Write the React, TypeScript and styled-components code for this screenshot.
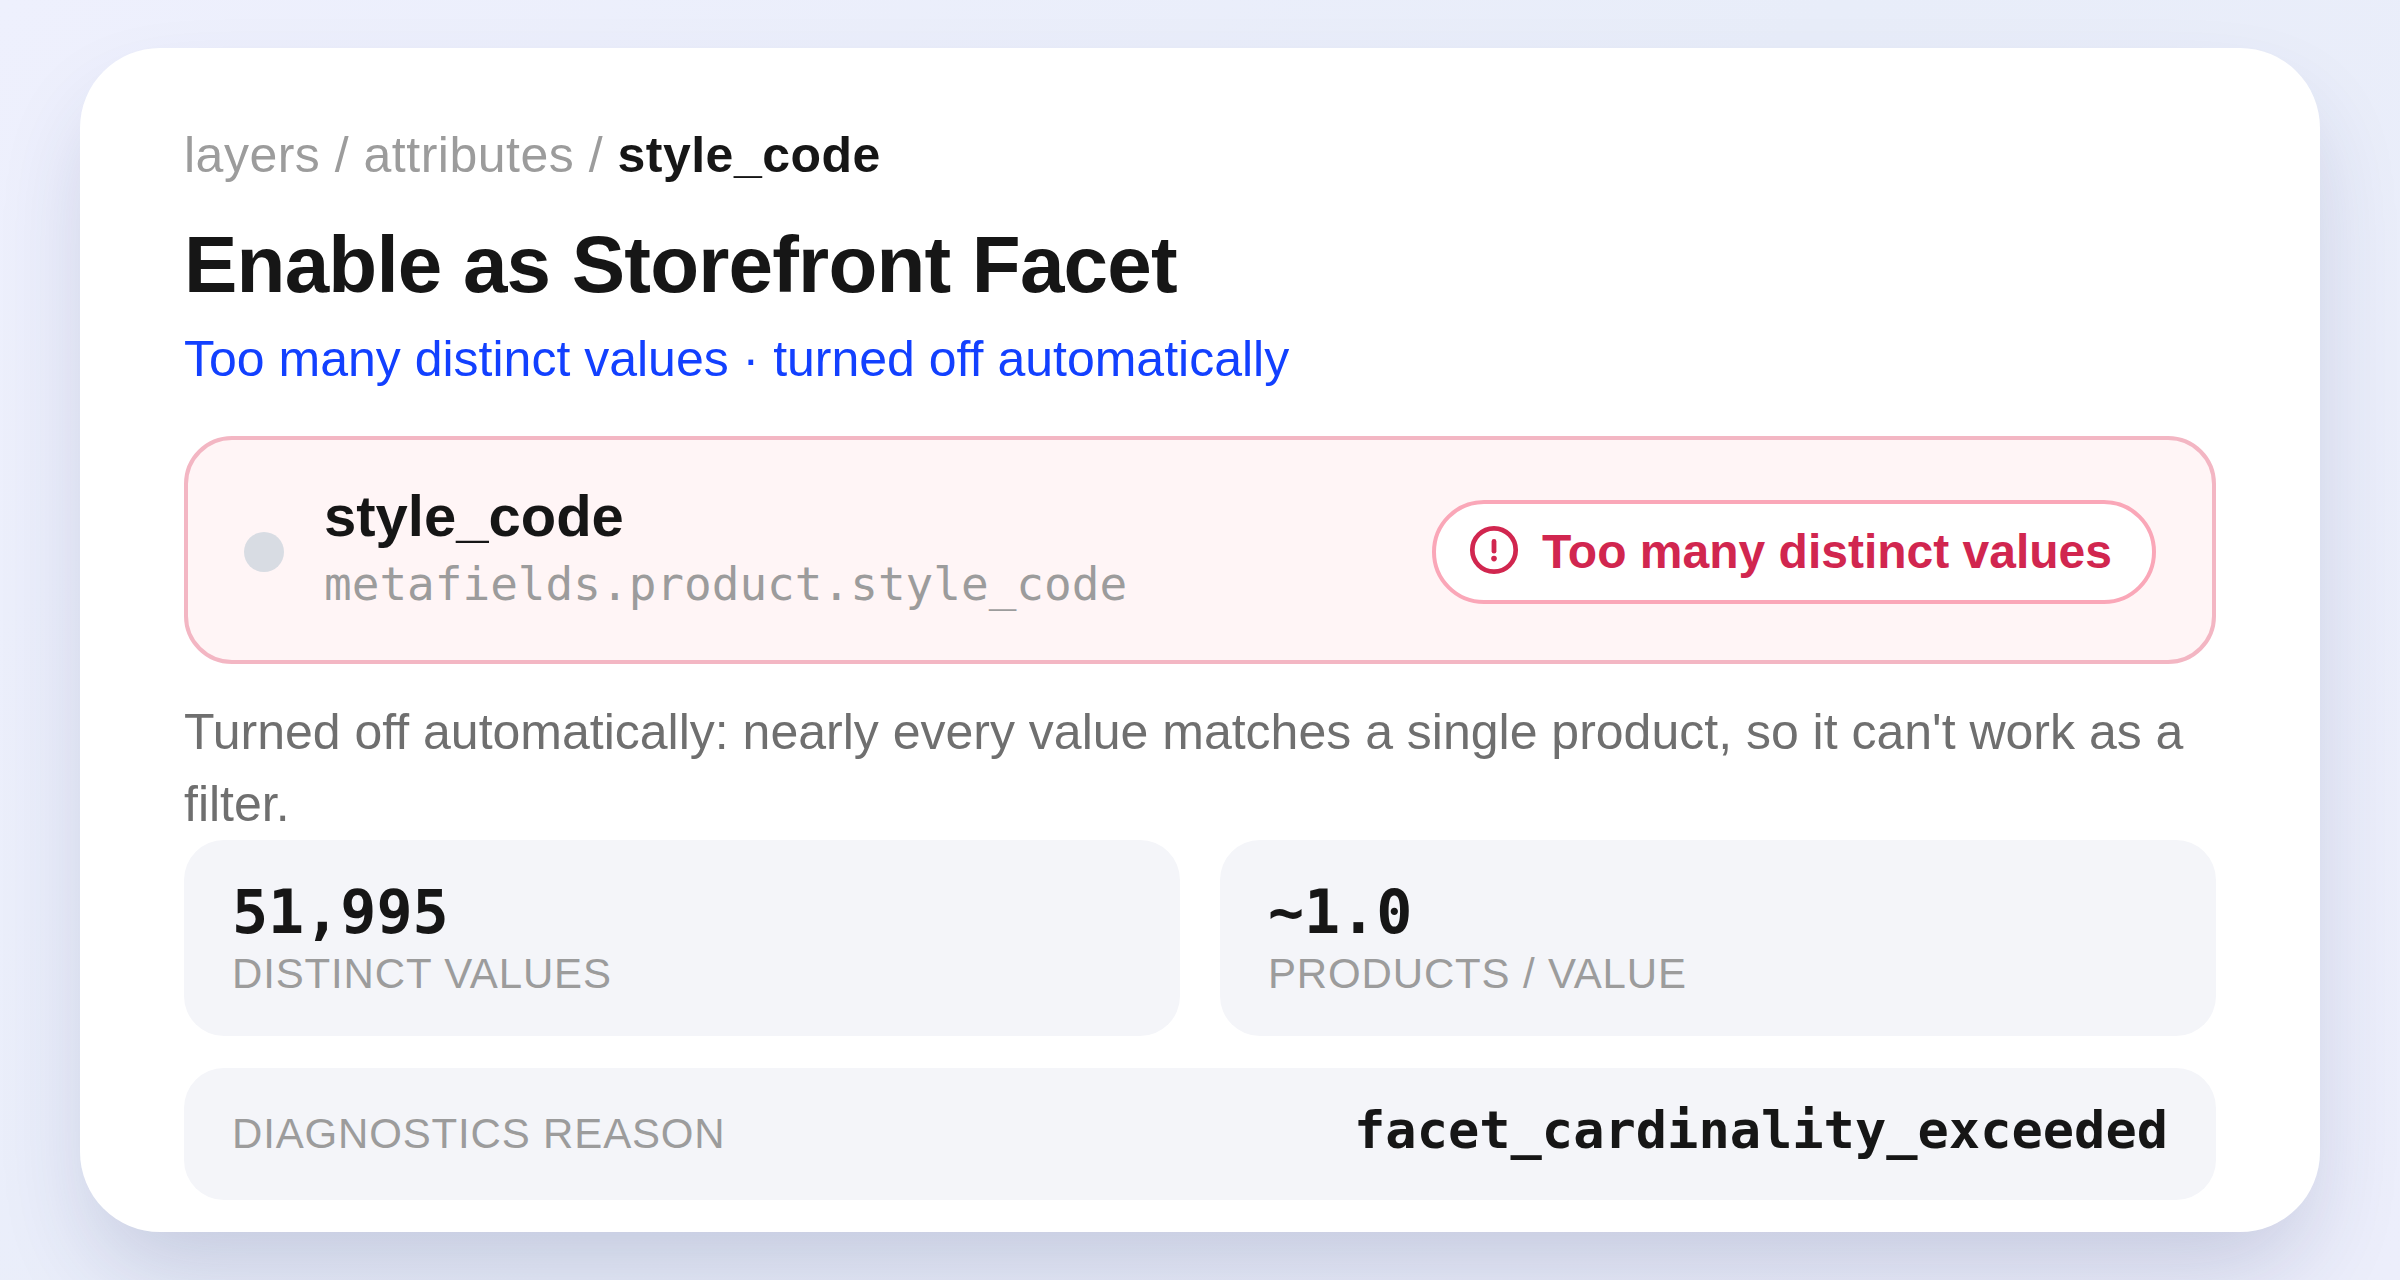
import React from "react";
import styled, { createGlobalStyle } from "styled-components";

const sans = `"Liberation Sans", Arial, sans-serif`;
const mono = `"DejaVu Sans Mono", monospace`;

const GlobalStyle = createGlobalStyle`
  *, *::before, *::after { box-sizing: border-box; }
  body { margin: 0; font-family: ${sans}; color: #161616; }
`;

const Page = styled.div`
  min-height: 100vh;
  padding: 48px 80px;
  background: linear-gradient(135deg, #eef0fd 0%, #e8edf9 50%, #eceefb 100%);
`;

const Card = styled.main`
  padding: 76px 104px 32px;
  border-radius: 80px;
  background: #ffffff;
  box-shadow: 0 48px 96px -16px rgba(40, 50, 110, 0.2);
`;

const Breadcrumb = styled.nav`
  color: #9c9c9c;
  font-size: 50px;
  line-height: 62px;
  letter-spacing: 0.01em;
`;

const Crumb = styled.a`
  color: inherit;
  text-decoration: none;
`;

const CurrentCrumb = styled.b`
  color: #161616;
`;

const Title = styled.h1`
  margin: 30px 0 0;
  font-size: 80px;
  line-height: 98px;
  letter-spacing: -0.01em;
`;

const Subtitle = styled.p`
  margin: 14px 0 0;
  color: #1240ff;
  font-size: 50px;
  line-height: 62px;
`;

const Alert = styled.section`
  display: flex;
  align-items: center;
  gap: 40px;
  margin-top: 46px;
  padding: 44px 56px 40px;
  border: 4px solid #f3b6c3;
  border-radius: 48px;
  background: #fff5f6;
`;

const Dot = styled.span`
  flex: none;
  width: 40px;
  height: 40px;
  border-radius: 50%;
  background: #d8dce3;
`;

const Attribute = styled.div`
  flex: 1;
  min-width: 0;
`;

const AttributeName = styled.div`
  font-size: 58px;
  font-weight: 700;
  line-height: 64px;
`;

const AttributePath = styled.div`
  color: #9c9c9c;
  font-family: ${mono};
  font-size: 46px;
  line-height: 72px;
`;

const Badge = styled.div`
  display: flex;
  align-items: center;
  gap: 22px;
  padding: 20px 40px 20px 32px;
  border: 4px solid #faa7b8;
  border-radius: 52px;
  background: #ffffff;
  color: #d1264f;
  font-size: 48px;
  font-weight: 700;
  line-height: 56px;
  white-space: nowrap;
`;

const BadgeIcon = styled.svg`
  flex: none;
  width: 52px;
  height: 52px;
  margin-bottom: 4px;
`;

const Note = styled.p`
  margin: 32px 0 0;
  color: #6f6f6f;
  font-size: 50px;
  line-height: 72px;
`;

const Stats = styled.div`
  display: grid;
  grid-template-columns: 1fr 1fr;
  gap: 40px;
`;

const Stat = styled.div`
  padding: 36px 48px;
  border-radius: 40px;
  background: #f4f5f9;
`;

const StatValue = styled.div`
  font-family: ${mono};
  font-size: 60px;
  font-weight: 700;
  line-height: 72px;
`;

const Label = styled.div`
  color: #9c9c9c;
  font-size: 42px;
  line-height: 52px;
  letter-spacing: 0.02em;
  text-transform: uppercase;
`;

const Reason = styled.div`
  display: flex;
  align-items: baseline;
  justify-content: space-between;
  margin-top: 32px;
  padding: 32px 48px 40px;
  border-radius: 40px;
  background: #f4f5f9;
`;

const ReasonCode = styled.code`
  font-family: ${mono};
  font-size: 52px;
  font-weight: 700;
  line-height: 60px;
`;

const stats = [
  { value: "51,995", label: "Distinct values" },
  { value: "~1.0", label: "Products / value" },
];

export default function App() {
  return (
    <>
      <GlobalStyle />
      <Page>
        <Card>
          <Breadcrumb aria-label="Breadcrumb">
            <Crumb href="#layers">layers</Crumb> / <Crumb href="#attributes">attributes</Crumb> /{" "}
            <CurrentCrumb>style_code</CurrentCrumb>
          </Breadcrumb>
          <Title>Enable as Storefront Facet</Title>
          <Subtitle>Too many distinct values · turned off automatically</Subtitle>
          <Alert>
            <Dot />
            <Attribute>
              <AttributeName>style_code</AttributeName>
              <AttributePath>metafields.product.style_code</AttributePath>
            </Attribute>
            <Badge>
              <BadgeIcon viewBox="0 0 52 52" fill="none" stroke="currentColor" strokeLinecap="round" aria-hidden="true">
                <circle cx="26" cy="26" r="21.7" strokeWidth="4.7" />
                <path d="M26 17.4v9.8" strokeWidth="4.8" />
                <circle cx="26" cy="34.6" r="2.8" fill="currentColor" stroke="none" />
              </BadgeIcon>
              Too many distinct values
            </Badge>
          </Alert>
          <Note>
            Turned off automatically: nearly every value matches a single product, so it can't work as a filter.
          </Note>
          <Stats>
            {stats.map((stat) => (
              <Stat key={stat.label}>
                <StatValue>{stat.value}</StatValue>
                <Label>{stat.label}</Label>
              </Stat>
            ))}
          </Stats>
          <Reason>
            <Label>Diagnostics reason</Label>
            <ReasonCode>facet_cardinality_exceeded</ReasonCode>
          </Reason>
        </Card>
      </Page>
    </>
  );
}
